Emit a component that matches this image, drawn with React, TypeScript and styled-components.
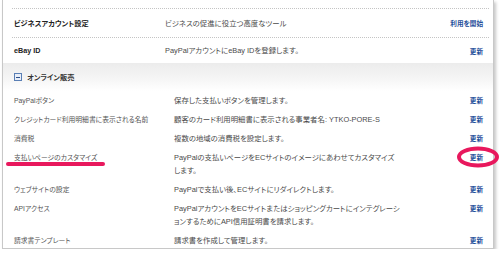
import styled, { createGlobalStyle } from 'styled-components'

const GlobalStyle = createGlobalStyle`
  html, body {
    margin: 0;
    padding: 0;
    background: #fff;
  }
  body {
    font-family: 'Liberation Sans', 'Noto Sans CJK JP', sans-serif;
    font-feature-settings: 'palt';
    color: #444;
  }
`

const Card = styled.div`
  position: relative;
  width: 490px;
  margin-left: 2px;
  padding-top: 8px;
  height: 240px;
  background: #fff;
  border: 1px solid #c8c8c8;
  border-top: none;
  box-shadow: 2px 2px 3px rgba(0, 0, 0, 0.22);
`

const TopList = styled.div`
  margin: 0 4px 0 9px;
`

const TopRow = styled.div<{ $h: number }>`
  display: grid;
  grid-template-columns: 151px 1fr 70px;
  align-items: center;
  height: ${(p) => p.$h}px;
  border-top: 1px dotted #c4c4c4;
  padding: 0 6px 0 2px;
`

const SectionHeader = styled.div`
  display: flex;
  align-items: center;
  gap: 5px;
  height: 28px;
  padding-left: 11px;
  background: linear-gradient(#ececec, #f6f6f6 60%, #fff);
  font-size: 7.2px;
  font-weight: bold;
  color: #333;
`

const MinusBox = styled.span`
  display: inline-flex;
  align-items: center;
  justify-content: center;
  width: 6px;
  height: 6px;
  border: 1px solid #5a7fb5;
  background: #e8eef8;
  &::after {
    content: '';
    width: 4px;
    height: 1px;
    background: #2c4f8a;
  }
`

const Row = styled.div`
  display: grid;
  grid-template-columns: 160px 1fr 62px;
  align-items: start;
  padding: 3px 10px 3px 11px;
  line-height: 13px;
`

const Label = styled.div<{ $bold?: boolean }>`
  position: relative;
  font-size: ${(p) => (p.$bold ? 7.2 : 6.8)}px;
  font-weight: ${(p) => (p.$bold ? 'bold' : 'normal')};
  color: ${(p) => (p.$bold ? '#222' : '#555')};
  white-space: nowrap;
`

const Marked = styled.span`
  position: relative;
  &::after {
    content: '';
    position: absolute;
    left: -8px;
    right: -8px;
    bottom: -5px;
    height: 4px;
    border-radius: 2px;
    background: #e8185d;
  }
`

const Desc = styled.div`
  font-size: 7.4px;
  color: #4a4a4a;
  line-height: 13px;
  white-space: nowrap;
`

const Action = styled.a`
  position: relative;
  justify-self: end;
  font-size: 6.6px;
  font-weight: bold;
  color: #1f4f9a;
  text-decoration: none;
  white-space: nowrap;
`

const Ring = styled.svg`
  position: absolute;
  left: -13px;
  top: -4px;
  width: 42px;
  height: 20px;
  overflow: visible;
`

type Item = {
  label: string
  desc: string[]
  marked?: boolean
}

const items: Item[] = [
  { label: 'PayPalボタン', desc: ['保存した支払いボタンを管理します。'] },
  {
    label: 'クレジットカード利用明細書に表示される名前',
    desc: ['顧客のカード利用明細書に表示される事業者名: YTKO-PORE-S'],
  },
  { label: '消費税', desc: ['複数の地域の消費税を設定します。'] },
  {
    label: '支払いページのカスタマイズ',
    desc: ['PayPalの支払いページをECサイトのイメージにあわせてカスタマイズ', 'します。'],
    marked: true,
  },
  { label: 'ウェブサイトの設定', desc: ['PayPalで支払い後、ECサイトにリダイレクトします。'] },
  {
    label: 'APIアクセス',
    desc: [
      'PayPalアカウントをECサイトまたはショッピングカートにインテグレーシ',
      'ョンするためにAPI信用証明書を請求します。',
    ],
  },
  { label: '請求書テンプレート', desc: ['請求書を作成して管理します。'] },
]

export default function App() {
  return (
    <>
      <GlobalStyle />
      <Card>
        <TopList>
          <TopRow $h={28}>
            <Label $bold>ビジネスアカウント設定</Label>
            <Desc>ビジネスの促進に役立つ高度なツール</Desc>
            <Action href="#">利用を開始</Action>
          </TopRow>
          <TopRow $h={25}>
            <Label $bold>eBay ID</Label>
            <Desc>PayPalアカウントにeBay IDを登録します。</Desc>
            <Action href="#">更新</Action>
          </TopRow>
        </TopList>

        <SectionHeader>
          <MinusBox />
          オンライン販売
        </SectionHeader>

        {items.map(({ label, desc, marked }) => (
          <Row key={label}>
            <Label>{marked ? <Marked>{label}</Marked> : label}</Label>
            <Desc>
              {desc.map((line) => (
                <div key={line}>{line}</div>
              ))}
            </Desc>
            <Action href="#">
              更新
              {marked && (
                <Ring viewBox="0 0 42 20">
                  <ellipse
                    cx="21"
                    cy="10"
                    rx="19"
                    ry="8.5"
                    fill="none"
                    stroke="#e8185d"
                    strokeWidth="4"
                  />
                </Ring>
              )}
            </Action>
          </Row>
        ))}
      </Card>
    </>
  )
}
